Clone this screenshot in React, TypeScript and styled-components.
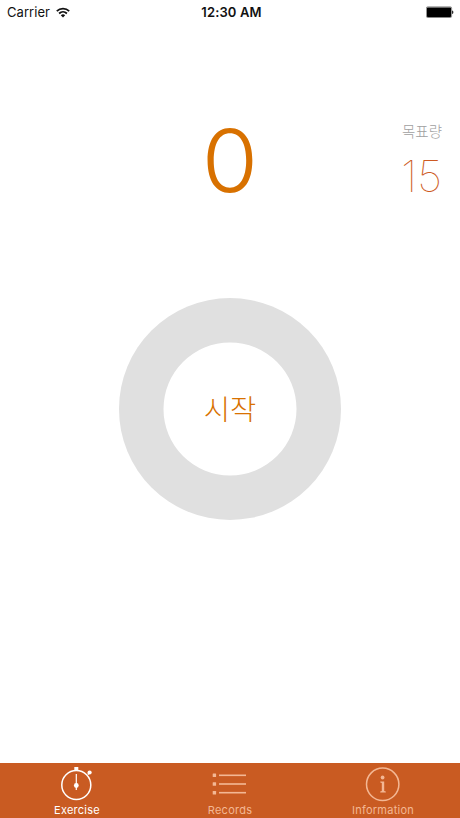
import React from "react";
import styled, { createGlobalStyle } from "styled-components";

const GlobalStyle = createGlobalStyle`
  * { box-sizing: border-box; }
  body { margin: 0; background: #fff; }
`;

const Screen = styled.div`
  width: 100%;
  height: 100vh;
  display: flex;
  flex-direction: column;
  overflow: hidden;
  background: #fff;
  font-family: Inter, "Noto Sans CJK KR", sans-serif;
`;

const StatusBar = styled.header`
  height: 24px;
  flex: none;
  display: grid;
  grid-template-columns: 1fr auto 1fr;
  align-items: center;
  padding: 0 6px 0 7px;
  color: #111;
  font-size: 13px;
  line-height: 24px;
`;

const Carrier = styled.div`
  display: flex;
  align-items: center;
  gap: 6px;
  letter-spacing: 0.05px;
`;

const Clock = styled.time`
  font-weight: 600;
  letter-spacing: 0.15px;
  padding-left: 2px;
`;

const BatterySlot = styled.div`
  display: flex;
  justify-content: flex-end;
`;

const Main = styled.main`
  flex: 1;
  display: flex;
  flex-direction: column;
  align-items: center;
`;

const Scores = styled.section`
  width: 100%;
  height: 108px;
  margin-top: 91px;
  display: grid;
  grid-template-columns: 1fr auto 1fr;
`;

const Count = styled.div`
  grid-column: 2;
  color: #d87100;
  font-size: 87px;
  font-weight: 300;
  line-height: 92px;
  transform: scaleX(1.05);
`;

const Goal = styled.div`
  justify-self: end;
  padding: 5px 18px 0 0;
  display: flex;
  flex-direction: column;
  align-items: flex-end;
`;

const GoalLabel = styled.span`
  color: #a0a0a0;
  font-family: "Noto Sans CJK KR", sans-serif;
  font-size: 14.5px;
  font-weight: 300;
  line-height: 22px;
`;

const GoalValue = styled.span`
  color: #cd5a22;
  font-size: 44px;
  font-weight: 140;
  line-height: 50px;
  margin-top: 9px;
`;

const StartButton = styled.button`
  width: 222px;
  height: 222px;
  margin-top: 75px;
  padding: 0 0 3px;
  display: flex;
  align-items: center;
  justify-content: center;
  border: 0;
  border-radius: 50%;
  box-shadow: inset 0 0 0 44.5px #e0e0e0;
  background: #fff;
  color: #d87100;
  font-family: "Noto Sans CJK KR", sans-serif;
  font-size: 28.5px;
  font-weight: 300;
  line-height: 40px;
`;

const TabBar = styled.nav`
  height: 55px;
  flex: none;
  display: grid;
  grid-template-columns: repeat(3, 153px);
  justify-content: center;
  background: #c95b22;
`;

const Tab = styled.a<{ $active?: boolean }>`
  display: flex;
  flex-direction: column;
  align-items: center;
  color: ${(p) => (p.$active ? "#fff" : "#f3b794")};
  font-size: 11px;
  line-height: 14px;
  letter-spacing: 0.25px;

  svg {
    display: block;
    margin-top: 3px;
    margin-bottom: 1px;
  }
`;

const WifiIcon = () => (
  <svg width="14" height="11" viewBox="0 0 14 11" fill="none" stroke="#111" strokeWidth="1.8">
    <path d="M.8 4.1a9 9 0 0 1 12.4 0M3.1 6.5a5.7 5.7 0 0 1 7.8 0" />
    <path d="M4.8 8.2a3.2 3.2 0 0 1 4.4 0L7 10.6Z" fill="#111" stroke="none" />
  </svg>
);

const BatteryIcon = () => (
  <svg width="28" height="12" viewBox="0 0 28 12">
    <rect x=".4" y=".9" width="25.2" height="10.6" rx="1.2" fill="#fff" stroke="#555" strokeWidth=".7" />
    <rect x="1" y="1.5" width="24" height="9.4" rx=".6" fill="#000" />
    <path d="M26.2 4.5c1.5.2 1.5 3.3 0 3.5Z" fill="#000" />
  </svg>
);

const StopwatchIcon = () => (
  <svg width="36" height="36" viewBox="0 0 36 36" fill="none" stroke="currentColor">
    <circle cx="17.3" cy="19" r="14.5" strokeWidth="1.5" />
    <path d="M17.3 8v16" strokeWidth="1.2" />
    <circle cx="17.3" cy="19.5" r="2.4" fill="currentColor" stroke="none" />
    <path d="M15.3 1h4v4h-4z" fill="currentColor" stroke="none" />
    <path d="m28.8 8.5 1-1" strokeWidth="1.5" />
    <circle cx="30.6" cy="6.5" r="2.1" fill="currentColor" stroke="none" />
  </svg>
);

const ListIcon = () => (
  <svg width="36" height="36" viewBox="0 0 36 36" fill="currentColor">
    {[9.3, 18, 26.7].map((y) => (
      <g key={y}>
        <rect x=".7" y={y - 1.7} width="3.4" height="3.4" rx=".5" />
        <rect x="7" y={y - 0.8} width="27" height="1.6" />
      </g>
    ))}
  </svg>
);

const InfoIcon = () => (
  <svg width="36" height="36" viewBox="0 0 36 36" fill="none" stroke="currentColor">
    <circle cx="17.7" cy="18.3" r="16.2" strokeWidth="1.5" />
    <circle cx="17.6" cy="11.5" r="1.9" fill="currentColor" stroke="none" />
    <path d="M15.3 15.6h3.9v9.3l1.6.5v1h-5.6v-1l1.6-.5v-8l-1.5-.4Z" fill="currentColor" stroke="none" />
  </svg>
);

export default function App() {
  return (
    <Screen>
      <GlobalStyle />
      <StatusBar>
        <Carrier>
          Carrier
          <WifiIcon />
        </Carrier>
        <Clock>12:30 AM</Clock>
        <BatterySlot>
          <BatteryIcon />
        </BatterySlot>
      </StatusBar>
      <Main>
        <Scores>
          <Count>0</Count>
          <Goal>
            <GoalLabel>목표량</GoalLabel>
            <GoalValue>15</GoalValue>
          </Goal>
        </Scores>
        <StartButton>시작</StartButton>
      </Main>
      <TabBar>
        <Tab $active>
          <StopwatchIcon />
          Exercise
        </Tab>
        <Tab>
          <ListIcon />
          Records
        </Tab>
        <Tab>
          <InfoIcon />
          Information
        </Tab>
      </TabBar>
    </Screen>
  );
}
